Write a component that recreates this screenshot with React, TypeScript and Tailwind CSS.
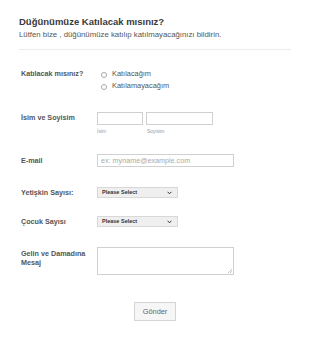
import React from "react";

export default function App() {
  return (
    <div className="w-[310px] h-[340px] bg-white font-['Liberation_Sans',Arial,sans-serif] overflow-hidden">
      <div className="px-[19px] pt-[16px]">
        <h1 className="text-[9.5px] font-bold text-[#3a3a3a] leading-[12px]">Düğünümüze Katılacak mısınız?</h1>
        <p className="text-[7.8px] text-[#555] leading-[10px] mt-[2px]">
          Lütfen bize , düğünümüze katılıp katılmayacağınızı bildirin.
        </p>
        <div className="mt-[9px] border-t border-[#ececec]" />
      </div>

      <div className="pl-[21px]">
        {/* Row 1 */}
        <div className="flex mt-[18px]">
          <div className="w-[76px] text-[7.2px] font-bold text-[#555] leading-[12px]">Katılacak mısınız?</div>
          <div className="flex flex-col">
            {["Katılacağım", "Katılamayacağım"].map((t) => (
              <label key={t} className="flex items-center h-[12px]">
                <span className="ml-[4px] w-[6px] h-[6px] rounded-full border border-[#aaa] bg-white mt-[2px]" />
                <span className="ml-[5px] text-[7.4px] text-[#555] leading-[12px]">{t}</span>
              </label>
            ))}
          </div>
        </div>

        {/* Row 2 */}
        <div className="flex mt-[20px]">
          <div className="w-[76px] text-[7.2px] font-bold text-[#555] leading-[12px]">İsim ve Soyisim</div>
          <div className="flex gap-[3px]">
            <div className="flex flex-col">
              <div className="w-[46px] h-[13px] border border-[#d0d0d0] bg-white" />
              <span className="text-[5px] text-[#999] leading-[8px] mt-[2px]">İsim</span>
            </div>
            <div className="flex flex-col">
              <div className="w-[67px] h-[13px] border border-[#d0d0d0] bg-white" />
              <span className="text-[5px] text-[#999] leading-[8px] mt-[2px] ml-[1px]">Soyisim</span>
            </div>
          </div>
        </div>

        {/* Row 3 */}
        <div className="flex mt-[19px]">
          <div className="w-[76px] text-[7.2px] font-bold text-[#555] leading-[13px]">E-mail</div>
          <div className="w-[137px] h-[13px] border border-[#d0d0d0] bg-white flex items-center pl-[3px]">
            <span className="text-[7.2px] text-[#aaa] leading-none">ex: myname@example.com</span>
          </div>
        </div>

        {/* Row 4 */}
        <div className="flex mt-[20px] items-center">
          <div className="w-[76px] text-[7.2px] font-bold text-[#555] leading-[11px]">Yetişkin Sayısı:</div>
          <Select />
        </div>

        {/* Row 5 */}
        <div className="flex mt-[18px] items-center">
          <div className="w-[76px] text-[7.2px] font-bold text-[#555] leading-[11px]">Çocuk Sayısı</div>
          <Select />
        </div>

        {/* Row 6 */}
        <div className="flex mt-[20px]">
          <div className="w-[76px] text-[7.2px] font-bold text-[#555] leading-[9px] pt-[2px]">
            Gelin ve Damadına
            <br />
            Mesaj
          </div>
          <div className="relative w-[137px] h-[28px] border border-[#d0d0d0] bg-white">
            <svg className="absolute right-[1px] bottom-[1px]" width="5" height="5" viewBox="0 0 5 5">
              <path d="M1 5 L5 1 M3 5 L5 3" stroke="#999" strokeWidth="0.6" />
            </svg>
          </div>
        </div>
      </div>

      <div className="flex justify-center mt-[27px]">
        <button className="w-[42px] h-[19px] border border-[#d4d4d4] bg-[#f6f6f6] text-[7.4px] text-[#666] leading-none">
          Gönder
        </button>
      </div>
    </div>
  );
}

function Select() {
  return (
    <div className="w-[81px] h-[11px] border border-[#d8d8d8] bg-[#efefef] flex items-center justify-between pl-[4px] pr-[5px]">
      <span className="text-[5.5px] font-bold text-[#333] leading-none">Please Select</span>
      <svg width="5" height="4" viewBox="0 0 5 4">
        <path d="M0.6 0.8 L2.5 2.8 L4.4 0.8" stroke="#333" strokeWidth="1" fill="none" />
      </svg>
    </div>
  );
}
